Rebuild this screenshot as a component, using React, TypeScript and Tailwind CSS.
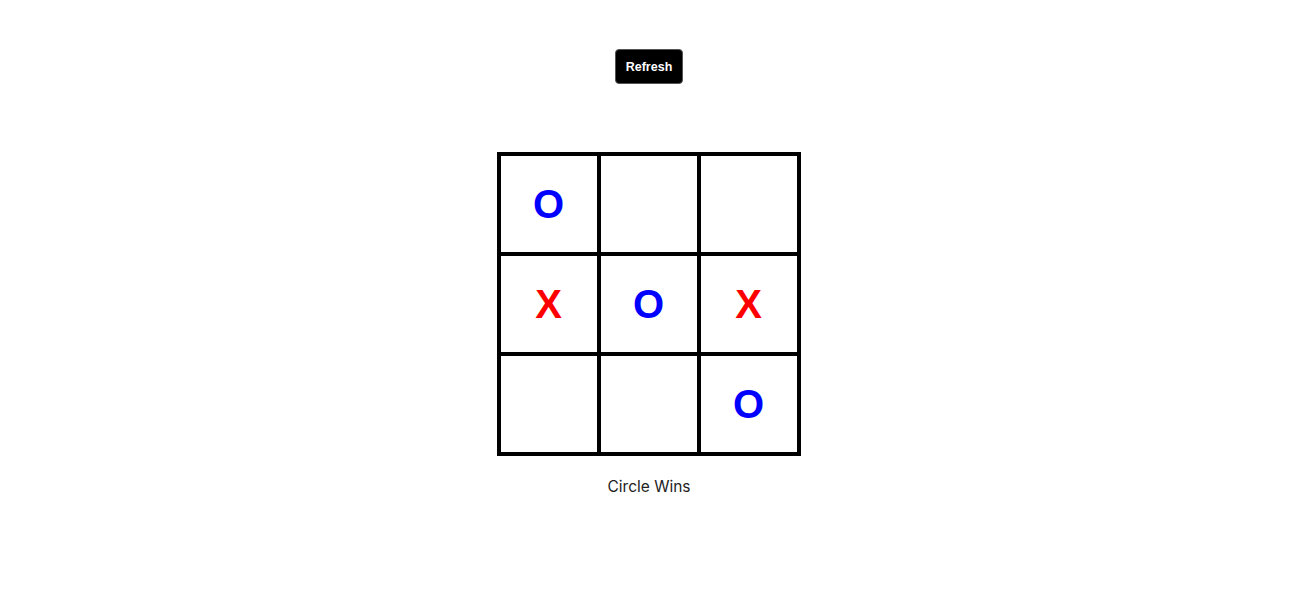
import { useState } from 'react'

type Mark = 'X' | 'O' | null

const initial: Mark[] = ['O', null, null, 'X', 'O', 'X', null, null, 'O']

export default function App() {
  const [board, setBoard] = useState<Mark[]>(initial)

  return (
    <div className="flex min-h-screen flex-col items-center bg-white pr-[4px] font-['Inter',sans-serif]">
      <button
        onClick={() => setBoard(Array(9).fill(null))}
        className="mt-[49px] h-[35px] rounded-[4px] border border-[#555] bg-black px-[10px] pt-[1px] font-['Liberation_Sans',Arial,sans-serif] text-[12.5px] font-bold text-white"
      >
        Refresh
      </button>
      <div className="mt-[68px] grid grid-cols-[repeat(3,100px)] border-2 border-black">
        {board.map((m, i) => (
          <div
            key={i}
            className="flex h-[100px] w-[100px] items-center justify-center border-2 border-black pr-[1px] font-['Liberation_Sans',Arial,sans-serif] text-[40px] font-bold"
          >
            {m && <span className={m === 'X' ? 'text-[#ff0000]' : 'text-[#0000ff]'}>{m}</span>}
          </div>
        ))}
      </div>
      <p className="mt-[19px] text-[15.5px] text-[#222]">Circle Wins</p>
    </div>
  )
}
